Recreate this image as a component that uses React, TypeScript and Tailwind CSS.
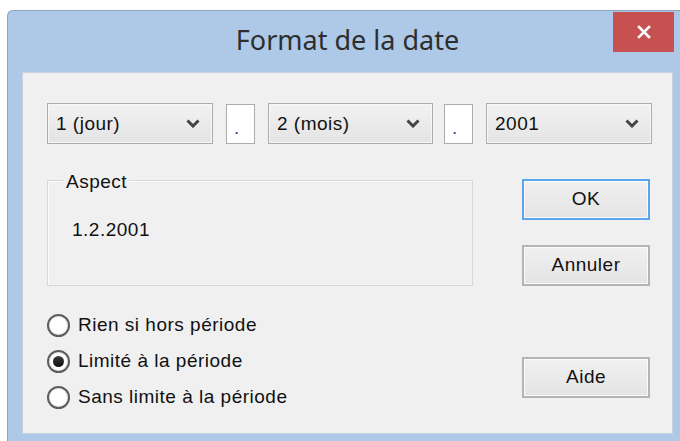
import React, { useState } from 'react'

const Chevron = () => (
    <svg width="14" height="9" viewBox="0 0 14 9" className="shrink-0">
        <polyline points="1.5,1.5 7,7 12.5,1.5" fill="none" stroke="#444" strokeWidth="3" strokeLinejoin="miter" />
    </svg>
)

const Combo = ({ label, width }: { label: string; width: string }) => (
    <div className={`${width} h-[41px] flex items-center justify-between pl-[8px] pr-[12px] border border-[#acacac] bg-gradient-to-b from-[#f2f2f2] to-[#e4e4e4] shadow-[inset_0_0_0_1px_#f7f7f7]`}>
        <span className="pt-[2px]">{label}</span>
        <Chevron />
    </div>
)

const Separator = () => (
    <div className="w-[29px] h-[40px] border border-[#acacac] bg-white flex items-end pl-[7px] pb-[8px] text-[#6b2f8f]">
        <span className="leading-[14px]">.</span>
    </div>
)

const Button = ({ label, focused = false }: { label: string; focused?: boolean }) => (
    <button
        type="button"
        className={`w-[128px] h-[41px] flex items-center justify-center bg-gradient-to-b from-[#f0f0f0] to-[#e4e4e4] ${focused ? 'border-2 border-[#5aa6ec]' : 'border-2 border-[#b4b4b4]'} shadow-[inset_0_0_0_1px_#fbfbfb]`}
    >
        {label}
    </button>
)

const Radio = ({ label, checked, onSelect }: { label: string; checked: boolean; onSelect: () => void }) => (
    <label className="h-[36px] flex items-center gap-[8px] cursor-default" onClick={onSelect}>
        <span className="w-[23px] h-[23px] rounded-full border-2 border-[#5c5c5c] bg-white flex items-center justify-center shadow-[inset_0_0_0_1px_#e8e8e8]">
            {checked && <span className="w-[11px] h-[11px] rounded-full bg-gradient-to-b from-[#3a3a3a] to-[#111]" />}
        </span>
        <span>{label}</span>
    </label>
)

const options = ['Rien si hors période', 'Limité à la période', 'Sans limite à la période']

export default function App() {
    const [mode, setMode] = useState(1)

    return (
        <div className="w-[680px] h-[441px] overflow-hidden bg-white pt-[10px] pl-[7px] font-['Liberation_Sans',Arial,sans-serif] text-[19px] tracking-[0.5px] text-[#111]">
            <div className="w-[678px] h-[440px] bg-[#adc9e7] rounded-tl-[6px] border-l border-t border-[#8ba4be]">
                {/* title bar */}
                <div className="relative h-[61px] flex justify-center pt-[12px]">
                    <span className="font-['Noto_Sans',sans-serif] text-[27px] leading-[34px] tracking-normal text-[#2e2e2e] pl-[2px]">Format de la date</span>
                    <div className="absolute top-[1px] right-[11px] w-[61px] h-[40px] bg-[#c75050] flex items-center justify-center">
                        <svg width="14" height="14" viewBox="0 0 14 14">
                            <path d="M2 2 L12 12 M12 2 L2 12" stroke="#fff" strokeWidth="2.6" strokeLinecap="square" />
                        </svg>
                    </div>
                </div>

                {/* client area */}
                <div className="ml-[14px] w-[651px] h-[362px] bg-[#f0f0f0] border border-[#c8d3df] pl-[24px] pt-[30px]">
                    <div className="flex items-center">
                        <Combo label="1 (jour)" width="w-[166px]" />
                        <div className="ml-[13px]"><Separator /></div>
                        <div className="ml-[13px]"><Combo label="2 (mois)" width="w-[165px]" /></div>
                        <div className="ml-[11px]"><Separator /></div>
                        <div className="ml-[13px]"><Combo label="2001" width="w-[166px]" /></div>
                    </div>

                    <div className="flex mt-[35px]">
                        <div className="w-[426px]">
                            <div className="relative mt-[1px] h-[106px] border border-[#d7d7d7] shadow-[inset_1px_1px_0_#fafafa] pl-[24px] pt-[35px]">
                                <span className="absolute -top-[10px] left-[16px] px-[2px] bg-[#f0f0f0] leading-[22px]">Aspect</span>
                                <span className="leading-[22px]">1.2.2001</span>
                            </div>
                            <div className="mt-[21px] flex flex-col">
                                {options.map((o, i) => (
                                    <Radio key={o} label={o} checked={mode === i} onSelect={() => setMode(i)} />
                                ))}
                            </div>
                        </div>

                        <div className="ml-[49px] flex flex-col">
                            <Button label="OK" focused />
                            <div className="mt-[25px]"><Button label="Annuler" /></div>
                            <div className="mt-[71px]"><Button label="Aide" /></div>
                        </div>
                    </div>
                </div>
            </div>
        </div>
    )
}
